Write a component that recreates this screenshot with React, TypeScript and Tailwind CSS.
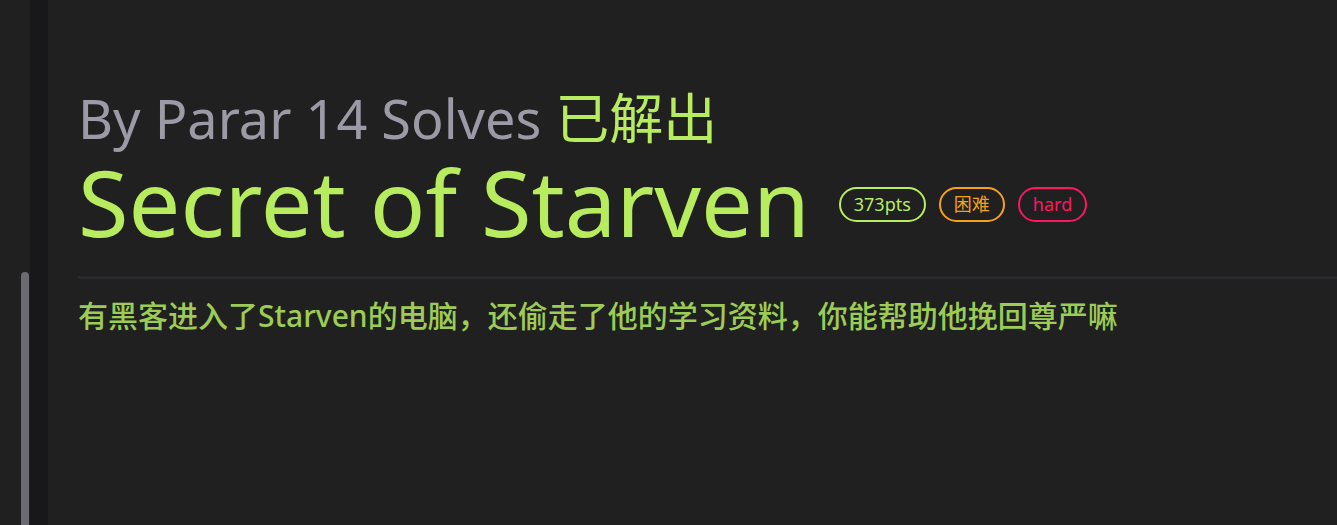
import React from "react";

// 题目详情头部
const tags = [
  { label: "373pts", cls: "border-[#b8ee62] text-[#b8ee62]" },
  { label: "困难", cls: "border-[#f5a11c] text-[#f5a11c]" },
  { label: "hard", cls: "border-[#ff1560] text-[#ff1560]" },
];

export default function App() {
  return (
    <div
      className="w-full h-[525px] flex bg-[#202020] overflow-hidden"
      style={{ fontFamily: '"Noto Sans", "Noto Sans CJK SC", sans-serif' }}
    >
      {/* 侧边滚动条 */}
      <div className="w-[30px] h-full flex justify-end pt-[272px] pr-px">
        <div className="w-[8px] h-full rounded-t-full bg-[#6c6c70]" />
      </div>
      <div className="w-[18px] h-full bg-[#18181a]" />

      <main className="flex-1 pt-[91px] pl-[30px]">
        <div className="text-[54px] leading-[54px] text-[#9b9aa6]">
          By Parar 14 Solves <span className="text-[#b6ec5e]">已解出</span>
        </div>

        <div className="flex items-center gap-[13px] mt-[7px]">
          <h1 className="text-[92px] leading-[100px] text-[#b6ec5e] mr-[16px]">
            Secret of Starven
          </h1>
          {tags.map((t) => (
            <span
              key={t.label}
              className={`h-[35px] px-[13px] mt-[4px] flex items-center rounded-full border-[2.5px] text-[18px] ${t.cls}`}
            >
              {t.label}
            </span>
          ))}
        </div>

        <div className="h-[3px] bg-[#2a2a2e] mt-[24px]" />

        <p className="mt-[14px] text-[30px] font-medium text-[#9ccc55]">
          有黑客进入了Starven的电脑，还偷走了他的学习资料，你能帮助他挽回尊严嘛
        </p>
      </main>
    </div>
  );
}
